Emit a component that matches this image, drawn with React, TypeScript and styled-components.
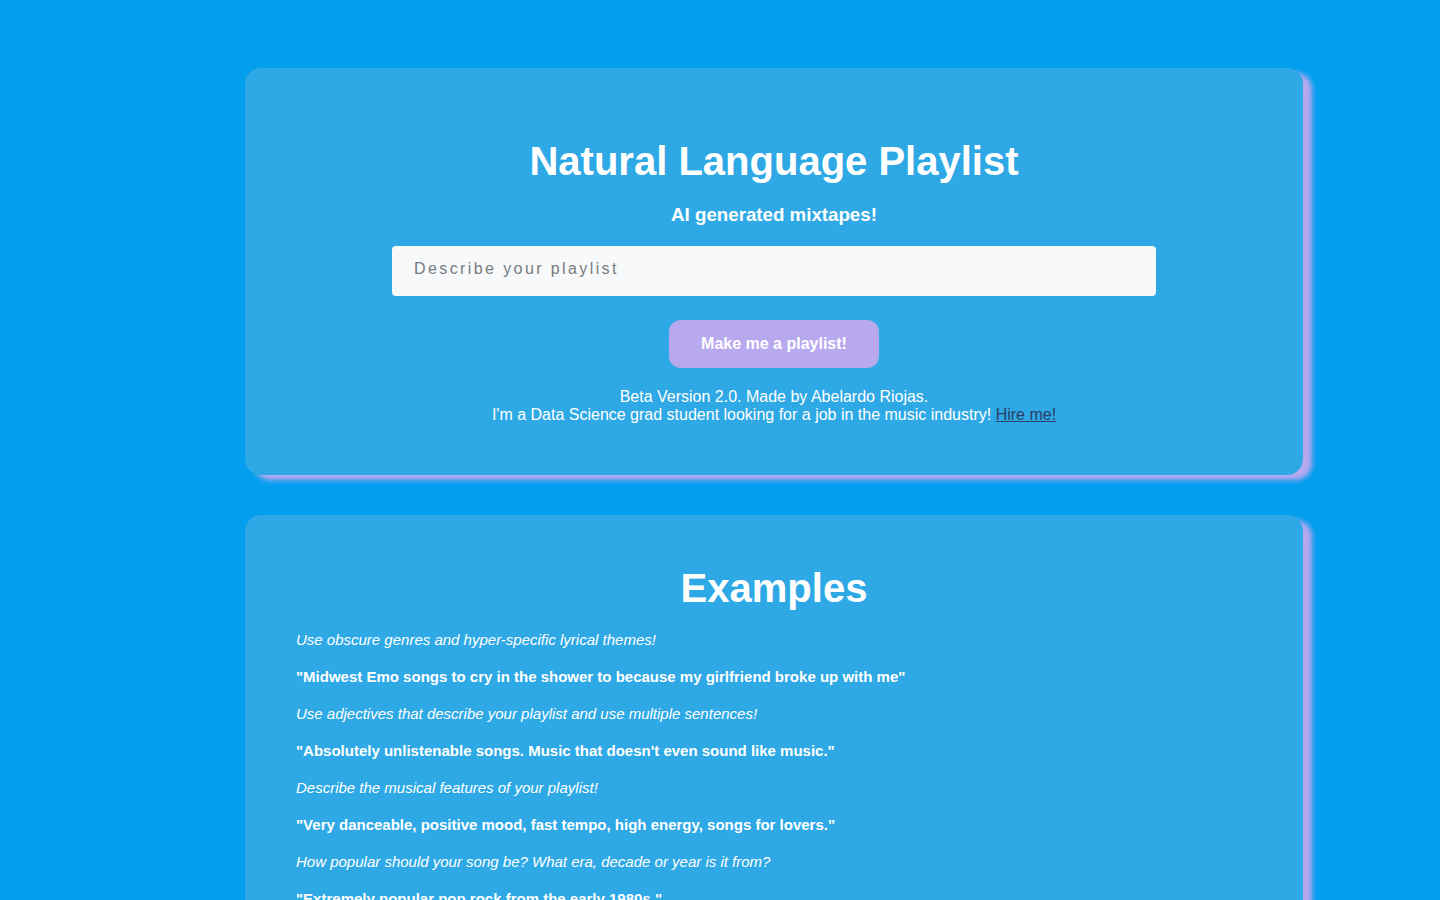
import React from "react";
import styled, { createGlobalStyle } from "styled-components";

const GlobalStyle = createGlobalStyle`
  html, body {
    margin: 0;
    padding: 0;
    background: #039fee;
    font-family: "Liberation Sans", Arial, sans-serif;
    color: #ffffff;
  }
`;

const Page = styled.main`
  display: flex;
  flex-direction: column;
  gap: 40px;
  padding: 68px 137px 40px 245px;
`;

const Card = styled.section<{ $pad: string }>`
  background: #2ea9e6;
  border-radius: 16px;
  box-shadow: 9px 5px 5px #b8a9ef;
  padding: ${(p) => p.$pad};
  display: flex;
  flex-direction: column;
  align-items: center;
`;

const Title = styled.h1`
  margin: 0;
  font-size: 40px;
  line-height: 46px;
  font-weight: 700;
  text-align: center;
`;

const Subtitle = styled.h2`
  margin: 20px 0 0;
  font-size: 18.72px;
  line-height: 22px;
  font-weight: 700;
`;

const Input = styled.input`
  box-sizing: border-box;
  margin-top: 20px;
  width: 764px;
  height: 50px;
  border: none;
  border-radius: 4px;
  background: #f8f9fa;
  padding: 0 22px 4px;
  font-family: "Liberation Sans", Arial, sans-serif;
  font-size: 16px;
  letter-spacing: 2.4px;
  color: #333;
  outline: none;
  &::placeholder {
    color: #777b7e;
  }
`;

const Button = styled.button`
  margin-top: 24px;
  width: 210px;
  height: 48px;
  border: none;
  border-radius: 12px;
  background: #b8a9ef;
  color: #ffffff;
  font-family: "Liberation Sans", Arial, sans-serif;
  font-size: 16px;
  font-weight: 700;
  cursor: pointer;
`;

const Footer = styled.p`
  margin: 20px 0 0;
  font-size: 16px;
  line-height: 18px;
  text-align: center;
`;

const HireLink = styled.a`
  color: #2c3e66;
  text-decoration: underline;
`;

const List = styled.div`
  align-self: stretch;
  display: flex;
  flex-direction: column;
  gap: 19px;
  margin-top: 20px;
`;

const Hint = styled.p`
  margin: 0;
  font-size: 15px;
  line-height: 18px;
  font-style: italic;
`;

const Prompt = styled.p`
  margin: 0;
  font-size: 15px;
  line-height: 18px;
  font-weight: 700;
`;

const examples: [string, string][] = [
  [
    "Use obscure genres and hyper-specific lyrical themes!",
    "\"Midwest Emo songs to cry in the shower to because my girlfriend broke up with me\"",
  ],
  [
    "Use adjectives that describe your playlist and use multiple sentences!",
    "\"Absolutely unlistenable songs. Music that doesn't even sound like music.\"",
  ],
  [
    "Describe the musical features of your playlist!",
    "\"Very danceable, positive mood, fast tempo, high energy, songs for lovers.\"",
  ],
  [
    "How popular should your song be? What era, decade or year is it from?",
    "\"Extremely popular pop rock from the early 1980s.\"",
  ],
];

export default function App() {
  return (
    <>
      <GlobalStyle />
      <Page>
        <Card $pad="70px 50px 51px">
          <Title>Natural Language Playlist</Title>
          <Subtitle>AI generated mixtapes!</Subtitle>
          <Input placeholder="Describe your playlist" />
          <Button>Make me a playlist!</Button>
          <Footer>
            Beta Version 2.0. Made by Abelardo Riojas.
            <br />
            I'm a Data Science grad student looking for a job in the music industry!{" "}
            <HireLink href="#">Hire me!</HireLink>
          </Footer>
        </Card>
        <Card $pad="50px 51px 50px">
          <Title>Examples</Title>
          <List>
            {examples.map(([hint, prompt]) => (
              <React.Fragment key={hint}>
                <Hint>{hint}</Hint>
                <Prompt>{prompt}</Prompt>
              </React.Fragment>
            ))}
          </List>
        </Card>
      </Page>
    </>
  );
}
